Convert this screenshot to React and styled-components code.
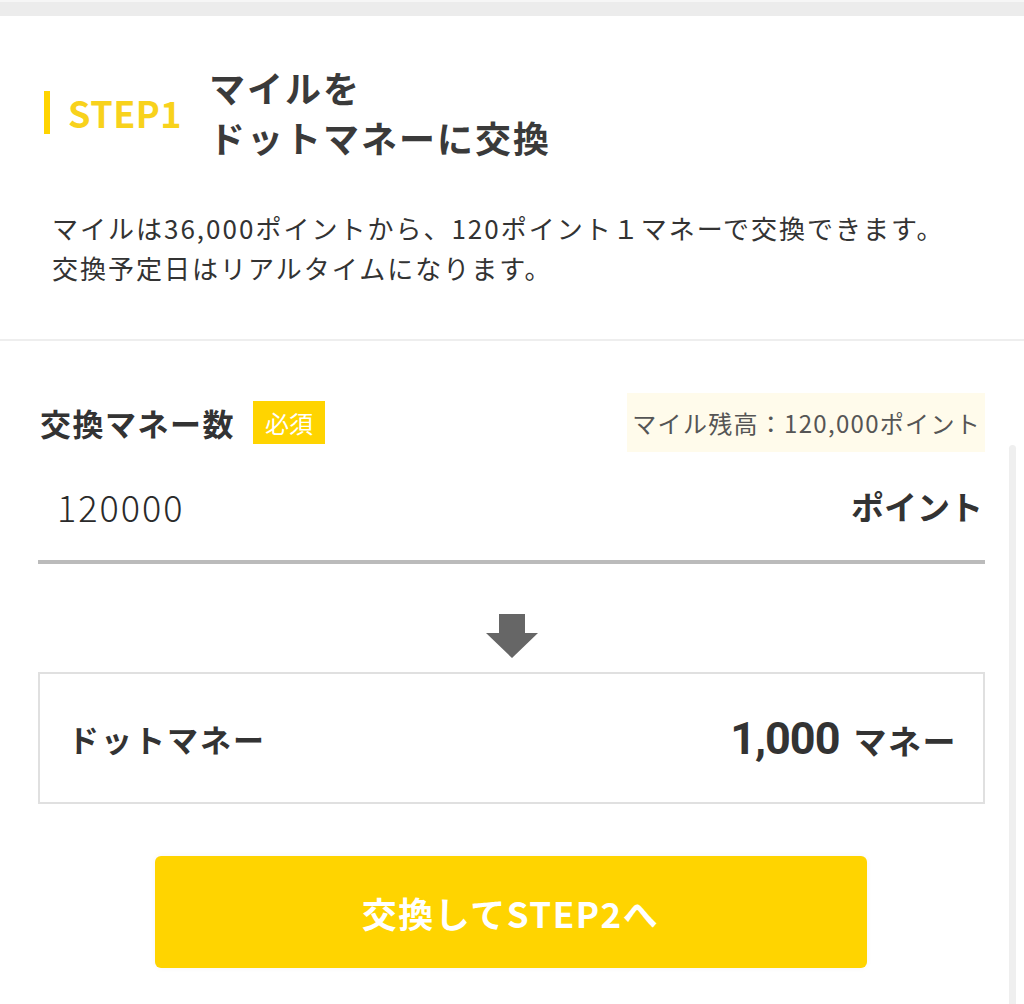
import React from "react";
import styled, { createGlobalStyle } from "styled-components";

const GlobalStyle = createGlobalStyle`
  html, body {
    margin: 0;
    padding: 0;
    background: #fff;
  }
  body {
    font-family: "Noto Sans CJK JP", "Noto Sans", sans-serif;
    color: #333;
  }
`;

const yellow = "#ffd400";

const Page = styled.div`
  position: relative;
  width: 1024px;
  height: 1004px;
  overflow: hidden;
  background: #fff;
`;

const TopBand = styled.div`
  height: 14px;
  background: #ececec;
  border-top: 2px solid #f6f6f6;
`;

const Intro = styled.section`
  padding: 46px 0 51px;
`;

const StepHeader = styled.div`
  display: flex;
  align-items: center;
  padding-left: 44px;
  gap: 27px;
`;

const StepTag = styled.div`
  border-left: 6px solid ${yellow};
  padding-left: 18px;
  height: 43px;
  display: flex;
  align-items: center;
  color: #f8d21c;
  font-size: 36px;
  font-weight: 700;
  letter-spacing: 0.5px;
`;

const Title = styled.h1`
  margin: 0;
  font-size: 36px;
  font-weight: 700;
  line-height: 50px;
  letter-spacing: 2px;
  color: #3a3a3a;
`;

const Description = styled.p`
  margin: 46px 0 0;
  padding: 0 52px;
  font-size: 26px;
  line-height: 40px;
  letter-spacing: 2px;
  color: #333;
`;

const Divider = styled.hr`
  margin: 0;
  border: none;
  height: 2px;
  background: #eeeeee;
`;

const Form = styled.section`
  padding: 52px 39px 0 38px;
`;

const LabelRow = styled.div`
  display: flex;
  align-items: center;
  justify-content: space-between;
  height: 59px;
`;

const LabelGroup = styled.div`
  display: flex;
  align-items: center;
  gap: 18px;
  padding-left: 2px;
`;

const Label = styled.span`
  font-size: 31px;
  font-weight: 700;
  letter-spacing: 1.5px;
  color: #333;
`;

const Required = styled.span`
  display: inline-flex;
  align-items: center;
  height: 43px;
  padding: 0 12px;
  background: ${yellow};
  color: #fff;
  font-size: 24px;
`;

const Balance = styled.div`
  display: flex;
  align-items: center;
  height: 59px;
  padding: 0 4px 0 5px;
  background: #fffbeb;
  color: #555;
  font-size: 24px;
  letter-spacing: 1.3px;
`;

const InputRow = styled.div`
  display: flex;
  align-items: center;
  justify-content: space-between;
  height: 108px;
  padding: 0 2px 0 19px;
  border-bottom: 4px solid #bbbbbb;
`;

const Amount = styled.span`
  font-size: 36px;
  font-weight: 300;
  letter-spacing: 2px;
  color: #2a2a2a;
`;

const Unit = styled.span`
  font-size: ${({ $size }) => $size || 32}px;
  font-weight: 700;
  letter-spacing: ${({ $spacing }) => $spacing || 0}px;
  color: #333;
`;

const ArrowWrap = styled.div`
  display: flex;
  justify-content: center;
  margin: 50px 0 14px;
`;

const ResultBox = styled.div`
  display: flex;
  align-items: center;
  justify-content: space-between;
  height: 128px;
  padding: 0 26px 0 28px;
  border: 2px solid #e0e0e0;
`;

const ResultValue = styled.div`
  display: flex;
  align-items: baseline;
  gap: 14px;
`;

const BigNumber = styled.span`
  font-family: Roboto, "Noto Sans", sans-serif;
  font-size: 45px;
  font-weight: 700;
  color: #333;
  letter-spacing: -1px;
`;

const ButtonWrap = styled.div`
  display: flex;
  justify-content: center;
  margin-top: 52px;
  padding-right: 2px;
`;

const SubmitButton = styled.button`
  width: 712px;
  height: 112px;
  border: none;
  border-radius: 6px;
  background: ${yellow};
  color: #fff;
  font-family: "Noto Sans CJK JP", "Noto Sans", sans-serif;
  font-size: 35px;
  font-weight: 700;
  letter-spacing: 1.5px;
  box-shadow: 0 0 6px rgba(0, 0, 0, 0.04);
  cursor: pointer;
`;

const ScrollThumb = styled.div`
  position: absolute;
  top: 445px;
  right: 8px;
  width: 7px;
  bottom: 0;
  border-radius: 4px 4px 0 0;
  background: #efefef;
`;

const DownArrow = () => (
  <svg width="52" height="44" viewBox="0 0 52 44">
    <path d="M13 0 H39 V19 H52 L26 44 L0 19 H13 Z" fill="#666" />
  </svg>
);

export default function App() {
  return (
    <Page>
      <GlobalStyle />
      <TopBand />
      <Intro>
        <StepHeader>
          <StepTag>STEP1</StepTag>
          <Title>
            マイルを
            <br />
            ドットマネーに交換
          </Title>
        </StepHeader>
        <Description>
          マイルは36,000ポイントから、120ポイント１マネーで交換できます。
          <br />
          交換予定日はリアルタイムになります。
        </Description>
      </Intro>
      <Divider />
      <Form>
        <LabelRow>
          <LabelGroup>
            <Label>交換マネー数</Label>
            <Required>必須</Required>
          </LabelGroup>
          <Balance>マイル残高：120,000ポイント</Balance>
        </LabelRow>
        <InputRow>
          <Amount>120000</Amount>
          <Unit $size={33}>ポイント</Unit>
        </InputRow>
        <ArrowWrap>
          <DownArrow />
        </ArrowWrap>
        <ResultBox>
          <Unit $size={31} $spacing={2}>ドットマネー</Unit>
          <ResultValue>
            <BigNumber>1,000</BigNumber>
            <Unit $size={33} $spacing={1.5}>マネー</Unit>
          </ResultValue>
        </ResultBox>
        <ButtonWrap>
          <SubmitButton>交換してSTEP2へ</SubmitButton>
        </ButtonWrap>
      </Form>
      <ScrollThumb />
    </Page>
  );
}
